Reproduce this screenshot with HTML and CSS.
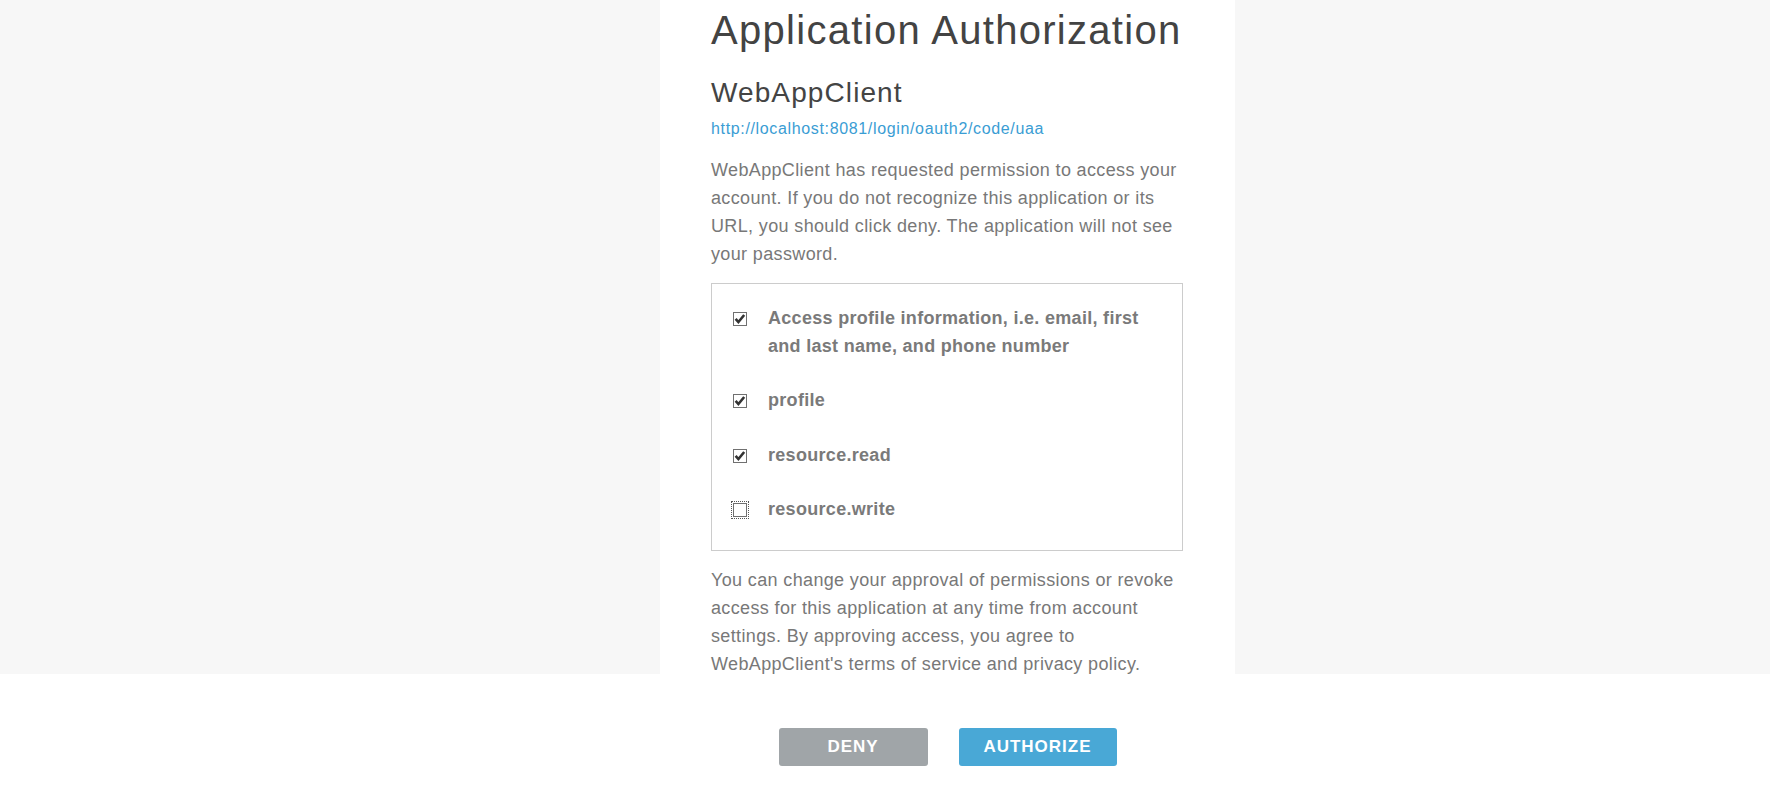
FILE: index.html
```html
<!DOCTYPE html>
<html lang="en">
<head>
<meta charset="utf-8">
<title>Application Authorization</title>
<link rel="stylesheet" href="styles.css">
</head>
<body>
<main class="stage">
  <section class="card">
    <h1 class="title">Application Authorization</h1>
    <h2 class="client">WebAppClient</h2>
    <a class="redirect" href="#">http://localhost:8081/login/oauth2/code/uaa</a>
    <p class="text intro">WebAppClient has requested permission to access your account. If you do not recognize this application or its URL, you should click deny. The application will not see your password.</p>
    <ul class="scopes">
      <li class="scope">
        <span class="check checked"><svg viewBox="0 0 14 14" width="14" height="14"><rect x="0.5" y="0.5" width="13" height="13" fill="#fff" stroke="#707070"/><path d="M2.6 6.8 L5.4 10 L11.2 3" fill="none" stroke="#333333" stroke-width="2.6"/></svg></span>
        <span class="scope-label">Access profile information, i.e. email, first and last name, and phone number</span>
      </li>
      <li class="scope">
        <span class="check checked"><svg viewBox="0 0 14 14" width="14" height="14"><rect x="0.5" y="0.5" width="13" height="13" fill="#fff" stroke="#707070"/><path d="M2.6 6.8 L5.4 10 L11.2 3" fill="none" stroke="#333333" stroke-width="2.6"/></svg></span>
        <span class="scope-label">profile</span>
      </li>
      <li class="scope">
        <span class="check checked"><svg viewBox="0 0 14 14" width="14" height="14"><rect x="0.5" y="0.5" width="13" height="13" fill="#fff" stroke="#707070"/><path d="M2.6 6.8 L5.4 10 L11.2 3" fill="none" stroke="#333333" stroke-width="2.6"/></svg></span>
        <span class="scope-label">resource.read</span>
      </li>
      <li class="scope">
        <span class="check focused"><svg viewBox="0 0 14 14" width="14" height="14"><rect x="0.5" y="0.5" width="13" height="13" fill="#fff" stroke="#707070"/></svg></span>
        <span class="scope-label">resource.write</span>
      </li>
    </ul>
    <p class="text outro">You can change your approval of permissions or revoke access for this application at any time from account settings. By approving access, you agree to <span class="nowrap">WebAppClient's terms of service and privacy policy.</span></p>
  </section>
</main>
<footer class="actions">
  <button class="btn deny" type="button">DENY</button>
  <button class="btn authorize" type="button">AUTHORIZE</button>
</footer>
</body>
</html>
```

FILE: styles.css
```css
html, body {
  margin: 0;
  padding: 0;
}

body {
  background: #ffffff;
  font-family: "Liberation Sans", Arial, Helvetica, sans-serif;
  overflow: hidden;
}

.stage {
  height: 674px;
  background: #f7f7f7;
  display: flex;
  justify-content: center;
  padding-left: 125px;
  box-sizing: border-box;
}

.card {
  width: 575px;
  background: #ffffff;
  padding: 7px 52px 0 51px;
  box-sizing: border-box;
}

.title {
  margin: 0;
  font-size: 40px;
  line-height: 46px;
  font-weight: normal;
  letter-spacing: 1.3px;
  color: #434343;
  white-space: nowrap;
}

.client {
  margin: 24px 0 0;
  font-size: 28px;
  line-height: 32px;
  font-weight: normal;
  letter-spacing: 1.1px;
  color: #444444;
}

.redirect {
  display: block;
  margin-top: 9px;
  font-size: 16px;
  line-height: 22px;
  letter-spacing: 0.65px;
  color: #3a9dd4;
  text-decoration: none;
}

.text {
  margin: 0;
  font-size: 18px;
  line-height: 28px;
  letter-spacing: 0.36px;
  color: #787878;
}

.intro {
  margin-top: 16px;
}

.outro {
  margin-top: 15px;
}

.nowrap {
  white-space: nowrap;
}

.scopes {
  list-style: none;
  margin: 15px 0 0;
  padding: 20px 20px 27px 21px;
  border: 1px solid #cccccc;
  display: flex;
  flex-direction: column;
  gap: 26.4px;
}

.scope {
  display: flex;
  align-items: flex-start;
  gap: 21px;
}

.check {
  flex: none;
  width: 14px;
  height: 14px;
  margin-top: 8px;
  display: block;
}

.check svg {
  display: block;
}

.check.focused {
  outline: 1px dotted #555555;
  outline-offset: 1px;
}

.scope-label {
  font-size: 18px;
  line-height: 28px;
  font-weight: bold;
  letter-spacing: 0.3px;
  color: #7a7a7a;
}

.actions {
  height: 111px;
  box-sizing: border-box;
  padding: 54px 0 0 125px;
  display: flex;
  justify-content: center;
  align-items: flex-start;
  gap: 31px;
  background: #ffffff;
}

.btn {
  height: 38px;
  border: none;
  border-radius: 3px;
  color: #ffffff;
  font-family: "Liberation Sans", Arial, Helvetica, sans-serif;
  font-size: 17px;
  font-weight: bold;
  letter-spacing: 1px;
  padding: 0;
  cursor: pointer;
}

.deny {
  width: 149px;
  background: #a0a5a8;
}

.authorize {
  width: 158px;
  background: #49a8d6;
}
```
